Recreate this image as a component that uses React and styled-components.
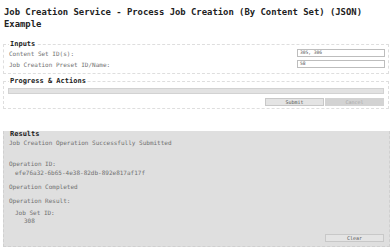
import React from 'react'
import styled, { createGlobalStyle } from 'styled-components'

const GlobalStyle = createGlobalStyle`
  body {
    margin: 0;
    background: #fff;
    font-family: "DejaVu Sans Mono", "Liberation Mono", monospace;
  }
`

const Page = styled.div`
  padding: 6px 3px 0 3px;
`

const Title = styled.h1`
  margin: 0 0 10px 1px;
  font-size: 8.9px;
  line-height: 12px;
  font-weight: bold;
  color: #222;
`

const Fieldset = styled.fieldset`
  margin: ${props => props.top || 0}px 0 0 0;
  padding: 0 ${props => props.right || 3}px ${props => props.bottom || 4}px 5px;
  border: 1px dashed #dedede;
  min-width: 0;
`

const Legend = styled.legend`
  padding: 0 1px;
  font-size: 7px;
  line-height: 8px;
  font-weight: bold;
  color: #222;
`

const Row = styled.div`
  display: flex;
  align-items: center;
  justify-content: space-between;
  height: 8px;
  margin-top: ${props => props.gap}px;
`

const Label = styled.span`
  font-size: 6px;
  color: #707070;
`

const Input = styled.div`
  box-sizing: border-box;
  width: 88px;
  height: 8px;
  padding-left: 2px;
  border: 1px solid #bdbdbd;
  font-size: 4.6px;
  line-height: 6px;
  color: #555;
`

const ProgressBar = styled.div`
  box-sizing: border-box;
  height: 6px;
  margin: 3px 0 0 -1px;
  background: #e2e2e2;
  border: 1px solid #d2d2d2;
`

const Actions = styled.div`
  display: flex;
  justify-content: flex-end;
  gap: 1px;
  margin-top: ${props => props.gap}px;
`

const Button = styled.div`
  box-sizing: border-box;
  width: 59px;
  height: 8px;
  display: flex;
  align-items: center;
  justify-content: center;
  font-size: 5px;
  color: ${props => (props.disabled ? '#aaa' : '#555')};
  background: ${props => (props.disabled ? '#d3d3d3' : '#e4e4e4')};
  border: 1px solid ${props => (props.disabled ? '#d3d3d3' : '#c8c8c8')};
`

const Results = styled.div`
  margin-top: 22px;
  margin-right: -1px;
  padding: 0 5px 4px 5px;
  background: #dfdfdf;
  border: 1px dashed #d0d0d0;
  border-top: none;
`

const ResultsTitle = styled.div`
  padding-left: 1px;
  font-size: 7px;
  line-height: 7px;
  font-weight: bold;
  color: #222;
`

const Line = styled.div`
  margin-top: ${props => props.gap || 0}px;
  padding-left: ${props => props.indent || 0}px;
  font-size: 6px;
  line-height: 8px;
  color: #707070;
`

export default function App () {
  return (
    <Page>
      <GlobalStyle />
      <Title>Job Creation Service - Process Job Creation (By Content Set) (JSON) Example</Title>

      <Fieldset bottom={5}>
        <Legend>Inputs</Legend>
        <Row gap={1}>
          <Label>Content Set ID(s):</Label>
          <Input>305, 306</Input>
        </Row>
        <Row gap={3}>
          <Label>Job Creation Preset ID/Name:</Label>
          <Input>58</Input>
        </Row>
      </Fieldset>

      <Fieldset top={3} right={4} bottom={2}>
        <Legend>Progress &amp; Actions</Legend>
        <ProgressBar />
        <Actions gap={4}>
          <Button>Submit</Button>
          <Button disabled>Cancel</Button>
        </Actions>
      </Fieldset>

      <Results>
        <ResultsTitle>Results</ResultsTitle>
        <Line gap={1}>Job Creation Operation Successfully Submitted</Line>
        <Line gap={13}>Operation ID:</Line>
        <Line gap={1} indent={6}>efe76a32-6b65-4e38-82db-892e817af17f</Line>
        <Line gap={6}>Operation Completed</Line>
        <Line gap={6}>Operation Result:</Line>
        <Line gap={4} indent={6}>Job Set ID:</Line>
        <Line indent={15}>308</Line>
        <Actions gap={9}>
          <Button>Clear</Button>
        </Actions>
      </Results>
    </Page>
  )
}
